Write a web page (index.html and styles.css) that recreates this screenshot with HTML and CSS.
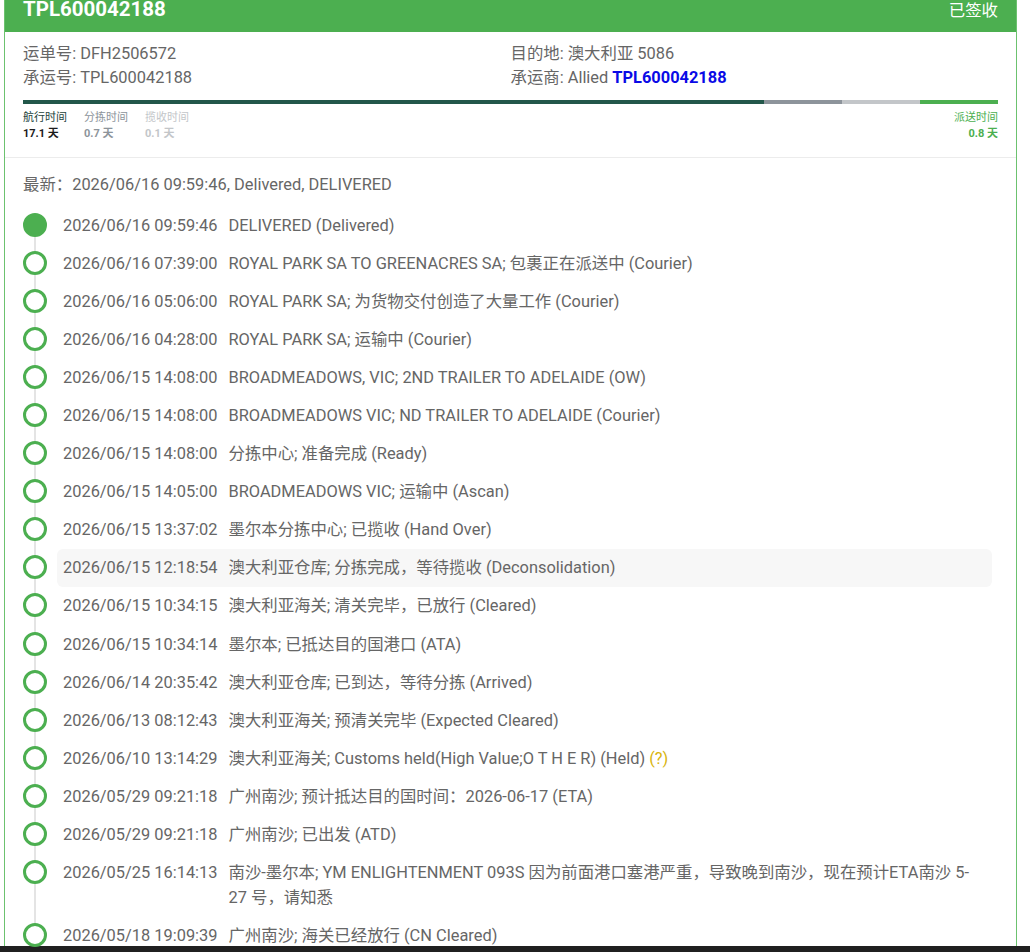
FILE: index.html
```html
<!DOCTYPE html>
<html lang="zh-CN">

<head>
    <title>TPL600042188 - 物流跟踪</title>
    <meta charset="utf-8">
    <link rel="stylesheet" href="styles.css">
</head>

<body>
    <div class="page">
        <div class="card">
            <div class="card-head">
                <span class="head-title">TPL600042188</span>
                <span class="head-status">已签收</span>
            </div>

            <div class="summary">
                <div class="info">
                    <div>运单号: DFH2506572</div>
                    <div>目的地: 澳大利亚 5086</div>
                    <div>承运号: TPL600042188</div>
                    <div>承运商: Allied <a class="carrier-no">TPL600042188</a></div>
                </div>

                <!-- 各阶段用时 -->
                <div class="bar">
                    <span class="seg seg-ship" style="width:76%"></span>
                    <span class="seg seg-sort" style="width:8%"></span>
                    <span class="seg seg-pick" style="width:8%"></span>
                    <span class="seg seg-due" style="width:8%"></span>
                </div>
                <div class="legend">
                    <div class="leg leg-ship">航行时间<b>17.1 天</b></div>
                    <div class="leg leg-sort">分拣时间<b>0.7 天</b></div>
                    <div class="leg leg-pick">揽收时间<b>0.1 天</b></div>
                    <div class="leg leg-due">派送时间<b>0.8 天</b></div>
                </div>
            </div>

            <div class="track">
                <div class="latest">最新：2026/06/16 09:59:46, Delivered, DELIVERED</div>

                <ul class="timeline">
                    <li class="event done">
                        <span class="dot"></span>
                        <div class="body"><span class="time">2026/06/16 09:59:46</span><span class="desc">DELIVERED (Delivered)</span></div>
                    </li>
                    <li class="event">
                        <span class="dot"></span>
                        <div class="body"><span class="time">2026/06/16 07:39:00</span><span class="desc">ROYAL PARK SA TO GREENACRES SA; 包裹正在派送中 (Courier)</span></div>
                    </li>
                    <li class="event">
                        <span class="dot"></span>
                        <div class="body"><span class="time">2026/06/16 05:06:00</span><span class="desc">ROYAL PARK SA; 为货物交付创造了大量工作 (Courier)</span></div>
                    </li>
                    <li class="event">
                        <span class="dot"></span>
                        <div class="body"><span class="time">2026/06/16 04:28:00</span><span class="desc">ROYAL PARK SA; 运输中 (Courier)</span></div>
                    </li>
                    <li class="event">
                        <span class="dot"></span>
                        <div class="body"><span class="time">2026/06/15 14:08:00</span><span class="desc">BROADMEADOWS, VIC; 2ND TRAILER TO ADELAIDE (OW)</span></div>
                    </li>
                    <li class="event">
                        <span class="dot"></span>
                        <div class="body"><span class="time">2026/06/15 14:08:00</span><span class="desc">BROADMEADOWS VIC; ND TRAILER TO ADELAIDE (Courier)</span></div>
                    </li>
                    <li class="event">
                        <span class="dot"></span>
                        <div class="body"><span class="time">2026/06/15 14:08:00</span><span class="desc">分拣中心; 准备完成 (Ready)</span></div>
                    </li>
                    <li class="event">
                        <span class="dot"></span>
                        <div class="body"><span class="time">2026/06/15 14:05:00</span><span class="desc">BROADMEADOWS VIC; 运输中 (Ascan)</span></div>
                    </li>
                    <li class="event">
                        <span class="dot"></span>
                        <div class="body"><span class="time">2026/06/15 13:37:02</span><span class="desc">墨尔本分拣中心; 已揽收 (Hand Over)</span></div>
                    </li>
                    <li class="event hover">
                        <span class="dot"></span>
                        <div class="body"><span class="time">2026/06/15 12:18:54</span><span class="desc">澳大利亚仓库; 分拣完成，等待揽收 (Deconsolidation)</span></div>
                    </li>
                    <li class="event">
                        <span class="dot"></span>
                        <div class="body"><span class="time">2026/06/15 10:34:15</span><span class="desc">澳大利亚海关; 清关完毕，已放行 (Cleared)</span></div>
                    </li>
                    <li class="event">
                        <span class="dot"></span>
                        <div class="body"><span class="time">2026/06/15 10:34:14</span><span class="desc">墨尔本; 已抵达目的国港口 (ATA)</span></div>
                    </li>
                    <li class="event">
                        <span class="dot"></span>
                        <div class="body"><span class="time">2026/06/14 20:35:42</span><span class="desc">澳大利亚仓库; 已到达，等待分拣 (Arrived)</span></div>
                    </li>
                    <li class="event">
                        <span class="dot"></span>
                        <div class="body"><span class="time">2026/06/13 08:12:43</span><span class="desc">澳大利亚海关; 预清关完毕 (Expected Cleared)</span></div>
                    </li>
                    <li class="event">
                        <span class="dot"></span>
                        <div class="body"><span class="time">2026/06/10 13:14:29</span><span class="desc">澳大利亚海关; Customs held(High Value;O T H E R) (Held) <span class="hint">(?)</span></span></div>
                    </li>
                    <li class="event">
                        <span class="dot"></span>
                        <div class="body"><span class="time">2026/05/29 09:21:18</span><span class="desc">广州南沙; 预计抵达目的国时间：2026-06-17 (ETA)</span></div>
                    </li>
                    <li class="event">
                        <span class="dot"></span>
                        <div class="body"><span class="time">2026/05/29 09:21:18</span><span class="desc">广州南沙; 已出发 (ATD)</span></div>
                    </li>
                    <li class="event">
                        <span class="dot"></span>
                        <div class="body"><span class="time">2026/05/25 16:14:13</span><span class="desc">南沙-墨尔本; YM ENLIGHTENMENT 093S 因为前面港口塞港严重，导致晚到南沙，现在预计ETA南沙 5-27 号，请知悉</span></div>
                    </li>
                    <li class="event">
                        <span class="dot"></span>
                        <div class="body"><span class="time">2026/05/18 19:09:39</span><span class="desc">广州南沙; 海关已经放行 (CN Cleared)</span></div>
                    </li>
                </ul>
            </div>
        </div>
    </div>

    <div class="taskbar"></div>
</body>

</html>
```

FILE: styles.css
```css
body {
    margin: 0;
    background-color: #fff;
    color: #666;
    font-family: Roboto, "Noto Sans CJK SC", sans-serif;
}

.page {
    padding-left: 4px;
}

.card {
    width: 1013px;
    box-sizing: border-box;
    margin-top: -14px;
    border: 1px solid #6cc26f;
    border-top: none;
}

.card-head {
    display: flex;
    align-items: center;
    justify-content: space-between;
    height: 46px;
    padding: 0 18px;
    background-color: #4caf50;
    color: #fff;
}

.head-title {
    font-size: 20.5px;
    font-weight: 700;
}

.head-status {
    font-size: 16.4px;
}

.summary {
    padding: 10px 18px 15px;
    border-bottom: 1px solid #ececec;
}

.info {
    display: grid;
    grid-template-columns: 1fr 1fr;
    font-size: 16.4px;
    line-height: 24px;
}

.carrier-no {
    color: #0a0ae6;
    font-weight: 700;
}

.bar {
    display: flex;
    height: 4px;
    margin-top: 10px;
}

.seg-ship {
    background-color: #22574a;
}

.seg-sort {
    background-color: #8d949b;
}

.seg-pick {
    background-color: #c3c6c9;
}

.seg-due {
    background-color: #4caf50;
}

.legend {
    display: flex;
    gap: 17px;
    margin-top: 6px;
    font-size: 11px;
    line-height: 16px;
}

.leg b {
    display: block;
    font-weight: 700;
}

.leg-ship {
    color: #24433b;
}

.leg-ship b {
    color: #1c1c1c;
}

.leg-sort {
    color: #8d949b;
}

.leg-pick {
    color: #c3c6c9;
}

.leg-due {
    margin-left: auto;
    text-align: right;
    color: #4caf50;
}

.track {
    padding: 14px 24px 0 18px;
}

.latest {
    font-size: 16.4px;
    line-height: 25px;
}

.timeline {
    list-style: none;
    margin: 9px 0 0;
    padding: 0;
}

.event {
    position: relative;
    display: flex;
}

/* linha cinza entre os pontos */
.event::before {
    content: "";
    position: absolute;
    left: 11px;
    top: 19px;
    bottom: -19px;
    width: 2px;
    background-color: #e4e4e4;
}

.event:last-child::before {
    display: none;
}

.dot {
    position: relative;
    z-index: 1;
    flex: none;
    width: 24px;
    height: 24px;
    box-sizing: border-box;
    margin-top: 6.5px;
    border: 3px solid #4caf50;
    border-radius: 50%;
    background-color: #fff;
}

.event.done .dot {
    background-color: #4caf50;
}

.body {
    display: flex;
    flex: 1;
    margin-left: 10px;
    padding: 6.5px 6px 6.6px;
    border-radius: 6px;
    font-size: 16.4px;
    line-height: 25px;
}

.event.hover .body {
    background-color: #f7f7f7;
}

.time {
    flex: none;
    margin-right: 11px;
}

.hint {
    color: #d8b40c;
}

.taskbar {
    position: fixed;
    left: 0;
    right: 0;
    bottom: 0;
    height: 6px;
    background-color: #202020;
}
```
